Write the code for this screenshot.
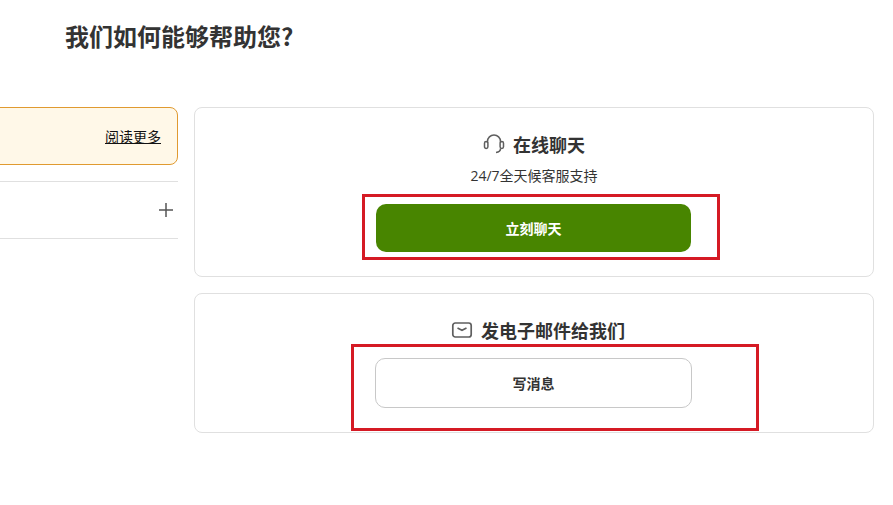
<main class="page">
	<h1>我们如何能够帮助您?</h1>
	<div class="columns">
		<aside class="side">
			<div class="notice"><a href="#more">阅读更多</a></div>
			<div class="accordion">
				<svg class="plus" width="16" height="16" viewBox="0 0 16 16" aria-hidden="true">
					<path d="M8 1v14M1 8h14" stroke="#555" stroke-width="1.5" fill="none" />
				</svg>
			</div>
		</aside>
		<section class="contact">
			<div class="card chat">
				<h2>
					<svg width="22" height="22" viewBox="0 0 22 22" fill="none" stroke="#5f5f5f" stroke-width="1.5" aria-hidden="true">
						<path d="M4.5 10V8.5a6.5 6.5 0 0 1 13 0V10" />
						<rect x="1.5" y="8.5" width="3.4" height="7" rx="1.7" />
						<rect x="17.1" y="8.5" width="3.4" height="7" rx="1.7" />
						<path d="M17.5 15.5c0 2.4-1.6 3.7-4.5 3.9" />
					</svg>
					在线聊天
				</h2>
				<p>24/7全天候客服支持</p>
				<div class="marked chat-mark">
					<button class="primary">立刻聊天</button>
				</div>
			</div>
			<div class="card mail">
				<h2 class="mail-title">
					<svg width="22" height="18" viewBox="0 0 22 18" fill="none" stroke="#5f5f5f" stroke-width="1.7" aria-hidden="true">
						<rect x="1.8" y="2" width="18.4" height="14" rx="2.5" />
						<path d="M6.5 7 11 9.2 15.5 7" />
					</svg>
					发电子邮件给我们
				</h2>
				<div class="marked mail-mark">
					<button class="secondary">写消息</button>
				</div>
			</div>
		</section>
	</div>
</main>

<style>
	:global(body) {
		background: #fff;
		overflow: hidden;
	}

	.page {
		box-sizing: border-box;
		width: 893px;
		height: 505px;
		padding-top: 19px;
		font-family: "Open Sans", "Noto Sans CJK SC", sans-serif;
		color: #333;
	}

	h1 {
		margin: 0 0 54px 65px;
		font-family: "Noto Sans CJK SC", sans-serif;
		font-size: 24px;
		line-height: 34px;
		font-weight: 700;
		color: #333;
	}

	.columns {
		display: grid;
		grid-template-columns: 178px 680px;
		column-gap: 16px;
		align-items: start;
	}

	.notice {
		box-sizing: border-box;
		display: flex;
		justify-content: flex-end;
		align-items: center;
		height: 58px;
		margin-left: -20px;
		padding-right: 16px;
		background: #fff8e8;
		border: 1px solid #e09a30;
		border-radius: 8px;
	}

	.notice a {
		font-family: "Noto Sans CJK SC", sans-serif;
		font-size: 14px;
		line-height: 18px;
		color: #111;
		text-decoration: underline;
	}

	.accordion {
		box-sizing: border-box;
		display: flex;
		justify-content: flex-end;
		align-items: center;
		height: 58px;
		margin-top: 16px;
		padding-right: 4px;
		border-top: 1px solid #e0e0e0;
		border-bottom: 1px solid #e0e0e0;
	}

	.contact {
		display: flex;
		flex-direction: column;
		gap: 16px;
	}

	.card {
		box-sizing: border-box;
		display: flex;
		flex-direction: column;
		align-items: center;
		border: 1px solid #e0e0e0;
		border-radius: 8px;
	}

	.chat {
		height: 170px;
		padding-top: 23px;
	}

	.mail {
		height: 140px;
		padding-top: 23px;
	}

	h2 {
		display: flex;
		align-items: center;
		gap: 8px;
		margin: 0;
		font-family: "Noto Sans CJK SC", sans-serif;
		font-size: 18px;
		line-height: 26px;
		font-weight: 700;
		color: #333;
	}

	.mail-title {
		margin-left: 8px;
	}

	p {
		margin: 9px 0 0;
		font-family: "Open Sans", "Noto Sans CJK SC", sans-serif;
		font-size: 14px;
		line-height: 20px;
		color: #333;
	}

	.marked {
		position: relative;
		margin-right: 1px;
	}

	.marked::after {
		content: "";
		position: absolute;
		border: 3px solid #d51a24;
		pointer-events: none;
	}

	.chat-mark {
		width: 315px;
		margin-top: 18px;
	}

	.chat-mark::after {
		inset: -10px -29px -8px -14px;
	}

	.mail-mark {
		width: 317px;
		margin-top: 15px;
	}

	.mail-mark::after {
		inset: -14px -67px -23px -24px;
	}

	button {
		display: block;
		box-sizing: border-box;
		width: 100%;
		font-family: "Noto Sans CJK SC", sans-serif;
		font-size: 14px;
		font-weight: 700;
		border-radius: 10px;
	}

	.primary {
		height: 48px;
		background: #488500;
		color: #fff;
		border: 0;
	}

	.secondary {
		height: 50px;
		background: #fff;
		color: #333;
		border: 1px solid #c8c8c8;
	}
</style>
